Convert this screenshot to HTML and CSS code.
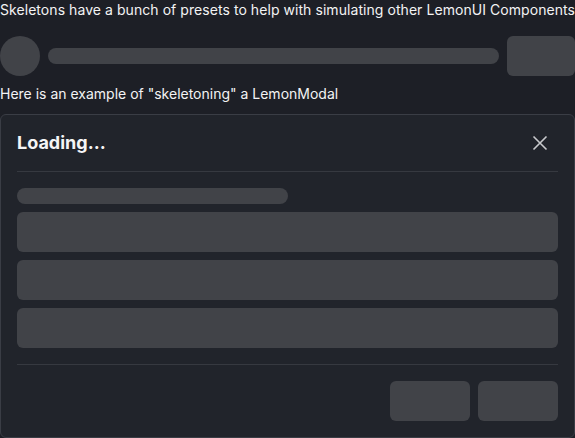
FILE: index.html
```html
<!DOCTYPE html>
<html>
<head>
<meta charset="utf-8">
<link rel="stylesheet" href="styles.css">
</head>
<body>
<div class="page">
  <p class="intro">Skeletons have a bunch of presets to help with simulating other LemonUI Components</p>
  <div class="row">
    <div class="sk sk-circle"></div>
    <div class="sk sk-bar"></div>
    <div class="sk sk-button"></div>
  </div>
  <p class="intro2">Here is an example of "skeletoning" a LemonModal</p>
  <div class="modal">
    <div class="modal-header">
      <h3 class="modal-title">Loading...</h3>
      <button class="close" aria-label="close">
        <svg width="16" height="16" viewBox="0 0 16 16"><path d="M1.5 1.5 L14.5 14.5 M14.5 1.5 L1.5 14.5" stroke="#c9cacd" stroke-width="1.6" fill="none"/></svg>
      </button>
    </div>
    <div class="modal-body">
      <div class="sk sk-text"></div>
      <div class="sk sk-field"></div>
      <div class="sk sk-field"></div>
      <div class="sk sk-field"></div>
    </div>
    <div class="modal-footer">
      <div class="sk sk-btn"></div>
      <div class="sk sk-btn"></div>
    </div>
  </div>
</div>
</body>
</html>
```
FILE: styles.css
```css
html, body {
  margin: 0;
  padding: 0;
  background: #1d1f26;
  overflow: hidden;
}
.page {
  font-family: Inter, "Noto Sans", sans-serif;
  color: #f3f3f4;
  font-size: 14px;
  line-height: 20px;
  width: 575px;
}
.intro {
  margin: 0 0 16px 0;
  white-space: nowrap;
  letter-spacing: 0.06px;
}
.row {
  display: flex;
  align-items: center;
  gap: 8px;
  height: 40px;
}
.sk {
  background: #414348;
}
.sk-circle {
  width: 40px;
  height: 40px;
  border-radius: 50%;
  flex: none;
}
.sk-bar {
  flex: 1;
  height: 16px;
  border-radius: 8px;
}
.sk-button {
  width: 68px;
  height: 40px;
  border-radius: 6px;
  flex: none;
}
.intro2 {
  margin: 8px 0 10px 0;
}
.modal {
  background: #21242b;
  border: 1px solid #3a3d45;
  border-radius: 6px;
  box-sizing: border-box;
  width: 575px;
  height: 324px;
  padding: 0 16px;
}
.modal-header {
  display: flex;
  align-items: center;
  justify-content: space-between;
  padding: 16px 0;
  border-bottom: 1px solid #363940;
  height: 24px;
  box-sizing: content-box;
}
.modal-title {
  margin: 0;
  font-size: 18px;
  line-height: 24px;
  font-weight: 700;
  color: #f5f5f6;
}
.close {
  background: none;
  border: 0;
  padding: 0;
  margin-right: 10px;
  width: 16px;
  height: 16px;
  display: flex;
}
.modal-body {
  display: flex;
  flex-direction: column;
  gap: 8px;
  padding: 16px 0;
  border-bottom: 1px solid #363940;
}
.sk-text {
  width: 50%;
  height: 16px;
  border-radius: 8px;
}
.sk-field {
  height: 40px;
  border-radius: 6px;
}
.modal-footer {
  display: flex;
  justify-content: flex-end;
  gap: 8px;
  padding: 16px 0;
}
.sk-btn {
  width: 80px;
  height: 40px;
  border-radius: 6px;
}
```
